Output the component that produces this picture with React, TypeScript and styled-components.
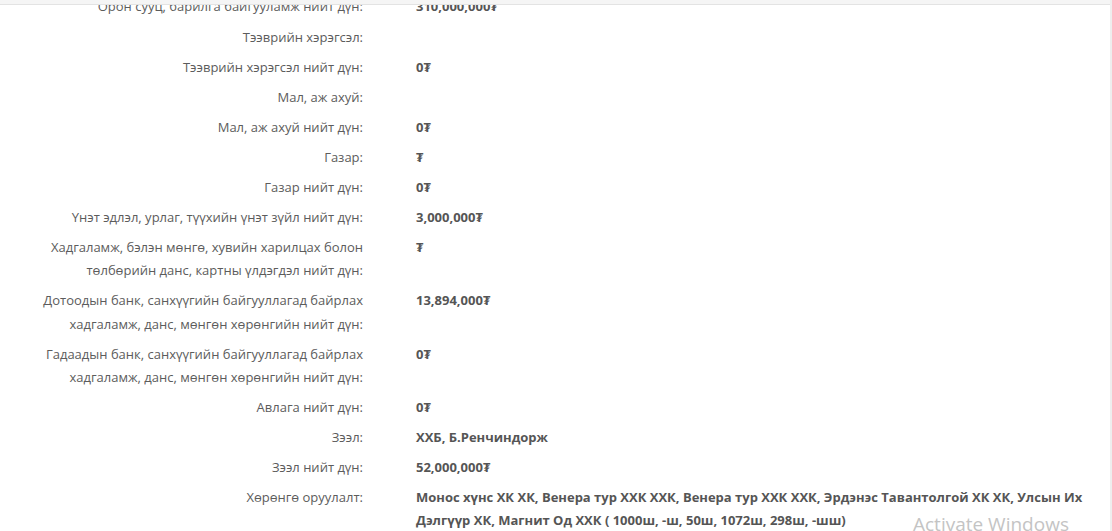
import { FunctionComponent, Fragment } from 'react';
import styled, { createGlobalStyle } from 'styled-components';

const GlobalStyle = createGlobalStyle`
  html, body {
    margin: 0;
    padding: 0;
    background: #ffffff;
    overflow: hidden;
  }
  body {
    font-family: "Open Sans", "Noto Sans", sans-serif;
    font-size: 13px;
    color: #555555;
  }
`;

const Page = styled.div`
  position: relative;
  width: 1112px;
  height: 531px;
  overflow: hidden;
  box-sizing: border-box;
  border-right: 2px solid #eeeeee;
`;

const TopBar = styled.div`
  position: absolute;
  top: 0;
  left: 0;
  right: 0;
  height: 4px;
  background: #f5f5f5;
  border-bottom: 1px solid #e3e3e3;
  z-index: 2;
`;

const List = styled.dl`
  margin: -8px 0 0 0;
  padding: 0;
  display: grid;
  grid-template-columns: 363px 1fr;
  column-gap: 53px;
`;

const Label = styled.dt`
  margin: 0 0 0 15px;
  padding: 3.45px 0;
  text-align: right;
  line-height: 23.2px;
  color: #5c5c5c;
`;

const Value = styled.dd`
  margin: 0;
  padding: 3.45px 8px 3.45px 0;
  line-height: 23.2px;
  font-weight: 700;
  color: #555555;
`;

const Watermark = styled.div`
  position: absolute;
  left: 913px;
  top: 511px;
  font-family: "Open Sans", "Noto Sans", sans-serif;
  font-size: 19px;
  color: #c4c4c4;
  white-space: nowrap;
  pointer-events: none;
`;

const rows: [string, string][] = [
  ['Орон сууц, барилга байгууламж нийт дүн:', '310,000,000₮'],
  ['Тээврийн хэрэгсэл:', ''],
  ['Тээврийн хэрэгсэл нийт дүн:', '0₮'],
  ['Мал, аж ахуй:', ''],
  ['Мал, аж ахуй нийт дүн:', '0₮'],
  ['Газар:', '₮'],
  ['Газар нийт дүн:', '0₮'],
  ['Үнэт эдлэл, урлаг, түүхийн үнэт зүйл нийт дүн:', '3,000,000₮'],
  ['Хадгаламж, бэлэн мөнгө, хувийн харилцах болон төлбөрийн данс, картны үлдэгдэл нийт дүн:', '₮'],
  ['Дотоодын банк, санхүүгийн байгууллагад байрлах хадгаламж, данс, мөнгөн хөрөнгийн нийт дүн:', '13,894,000₮'],
  ['Гадаадын банк, санхүүгийн байгууллагад байрлах хадгаламж, данс, мөнгөн хөрөнгийн нийт дүн:', '0₮'],
  ['Авлага нийт дүн:', '0₮'],
  ['Зээл:', 'ХХБ, Б.Ренчиндорж'],
  ['Зээл нийт дүн:', '52,000,000₮'],
  [
    'Хөрөнгө оруулалт:',
    'Монос хүнс ХК ХК, Венера тур ХХК ХХК, Венера тур ХХК ХХК, Эрдэнэс Тавантолгой ХК ХК, Улсын Их Дэлгүүр ХК, Магнит Од ХХК ( 1000ш, -ш, 50ш, 1072ш, 298ш, -шш)',
  ],
];

const App: FunctionComponent = () => {
  return (
    <>
      <GlobalStyle />
      <Page>
        <TopBar />
        <List>
          {rows.map(([label, value], i) => (
            <Fragment key={i}>
              <Label>{label}</Label>
              <Value>{value || '\u00a0'}</Value>
            </Fragment>
          ))}
        </List>
        <Watermark>Activate Windows</Watermark>
      </Page>
    </>
  );
};

export default App;
